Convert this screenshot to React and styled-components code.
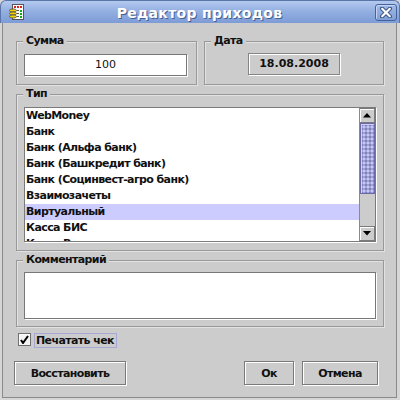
import React from "react";
import styled, { createGlobalStyle } from "styled-components";

const Global = createGlobalStyle`
  html, body { margin: 0; padding: 0; background: #cccccc; }
  body { font-family: "DejaVu Sans", "Liberation Sans", sans-serif; }
  * { box-sizing: border-box; }
`;

const Window = styled.div`
  width: 400px;
  height: 400px;
  display: flex;
  flex-direction: column;
  background: #d6d6d6;
`;

const TitleBar = styled.div`
  height: 23px;
  flex: none;
  display: flex;
  align-items: center;
  padding: 0 2px 0 8px;
  border: 1px solid #5a76a8;
  border-bottom: none;
  border-radius: 6px 6px 0 0;
  background: linear-gradient(#b4c9ee, #94b0e2 45%, #7d9bd6);
`;

const Title = styled.div`
  flex: 1;
  text-align: center;
  color: #ffffff;
  font: bold 14px "DejaVu Sans", sans-serif;
  letter-spacing: 0.3px;
  text-shadow: 1px 1px 0 #45608f;
  padding-top: 1px;
`;

const CloseBox = styled.div`
  width: 22px;
  height: 17px;
  border: 1px solid #46629a;
  border-radius: 3px;
  background: linear-gradient(#9fb9e6, #7f9fd6);
  box-shadow: inset 1px 1px 0 #c4d4f2;
  display: flex;
  align-items: center;
  justify-content: center;
`;

const Body = styled.div`
  flex: 1;
  margin: 0 3px 2px 2px;
  border: 1px solid #8a8a8a;
  border-top: none;
  background: #cccccc;
  padding: 18px 12px 0 13px;
  display: flex;
  flex-direction: column;
  font: bold 11px "DejaVu Sans", sans-serif;
  letter-spacing: -0.6px;
  color: #111;
`;

const TopRow = styled.div`
  display: grid;
  grid-template-columns: 181px 180px;
  column-gap: 7px;
`;

const Group = styled.div`
  position: relative;
  border: 1px solid #999999;
  box-shadow: 1px 1px 0 #e2e2e2, inset 1px 1px 0 #e2e2e2;
  padding: ${(p) => p.$pad};
  margin-top: ${(p) => p.$mt || 0}px;
  display: flex;
  justify-content: ${(p) => (p.$center ? "center" : "flex-start")};
`;

const Legend = styled.span`
  position: absolute;
  left: 6px;
  top: -8px;
  height: 13px;
  line-height: 13px;
  padding: 0 3px;
  background: #cccccc;
`;

const AmountField = styled.div`
  width: 163px;
  height: 22px;
  border: 1px solid #777;
  box-shadow: 1px 1px 0 #fff;
  background: #fff;
  text-align: center;
  line-height: 20px;
  font-weight: normal;
  letter-spacing: 0;
`;

const DateBox = styled.div`
  width: 92px;
  height: 22px;
  border: 1px solid #858585;
  box-shadow: 1px 1px 0 #fff, inset 1px 1px 0 #fff;
  text-align: center;
  line-height: 20px;
  letter-spacing: 0;
`;

const ListBox = styled.div`
  flex: 1;
  height: 135px;
  border: 1px solid #7a7a7a;
  box-shadow: 1px 1px 0 #fff;
  background: #fff;
  display: flex;
  overflow: hidden;
`;

const Rows = styled.div`
  flex: 1;
  overflow: hidden;
`;

const Row = styled.div`
  height: 16px;
  line-height: 16px;
  padding-left: 1px;
  white-space: nowrap;
  background: ${(p) => (p.$sel ? "#ccccff" : "transparent")};
`;

const ScrollBar = styled.div`
  width: 16px;
  flex: none;
  border-left: 1px solid #8a8a8a;
  background: #cccccc;
  display: flex;
  flex-direction: column;
`;

const ArrowBtn = styled.div`
  height: 15px;
  flex: none;
  border: 1px solid #7a7a7a;
  border-left: none;
  box-shadow: inset 1px 1px 0 #fff;
  background: #cccccc;
  display: flex;
  align-items: center;
  justify-content: center;
`;

const Thumb = styled.div`
  height: 71px;
  flex: none;
  border: 1px solid #6a6aa6;
  background-color: #a4a4dc;
  background-image: radial-gradient(circle, #d8d8ff 0.6px, transparent 0.9px),
    radial-gradient(circle, #6a6aa6 0.6px, transparent 0.9px);
  background-size: 4px 4px, 4px 4px;
  background-position: 1px 1px, 3px 3px;
  box-shadow: inset 1px 1px 0 #d0d0ff;
`;

const Track = styled.div`
  flex: 1;
`;

const CommentArea = styled.div`
  flex: 1;
  height: 47px;
  border: 1px solid #777;
  box-shadow: 1px 1px 0 #fff;
  background: #fff;
`;

const CheckRow = styled.div`
  margin-top: 6px;
  display: flex;
  align-items: flex-start;
  gap: 3px;
  padding-left: 2px;
`;

const CheckBox = styled.div`
  width: 13px;
  height: 13px;
  border: 1px solid #6f6f6f;
  box-shadow: inset 1px 1px 0 #fff;
  background: #f4f4f4;
  display: flex;
  align-items: center;
  justify-content: center;
`;

const CheckLabel = styled.div`
  height: 15px;
  line-height: 13px;
  padding: 0 2px 0 1px;
  border: 1px solid #a8a8d8;
`;

const ButtonRow = styled.div`
  margin-top: 13px;
  display: flex;
  gap: 8px;
  margin-left: -2px;
  margin-right: 6px;
`;

const Spacer = styled.div`
  flex: 1;
`;

const Button = styled.div`
  width: ${(p) => p.$w}px;
  height: 24px;
  border: 1px solid #7a7a7a;
  box-shadow: 1px 1px 0 #fff, inset 1px 1px 0 #fff;
  background: #cccccc;
  display: flex;
  align-items: center;
  justify-content: center;
`;

const AppIcon = () => (
  <svg width="15" height="17" viewBox="0 0 15 17">
    <rect x="3.5" y="0.5" width="11" height="15" fill="#fff" stroke="#555" />
    <rect x="5" y="2" width="2" height="2" fill="#d22" />
    <rect x="8" y="2" width="2" height="2" fill="#d22" />
    <rect x="11" y="2" width="2" height="2" fill="#d22" />
    <rect x="11" y="6" width="2" height="2" fill="#1a1" />
    <rect x="11" y="9" width="2" height="2" fill="#1a1" />
    <rect x="11" y="12" width="2" height="2" fill="#1a1" />
    <rect x="8" y="6" width="2" height="1" fill="#555" />
    <rect x="8" y="9" width="2" height="1" fill="#555" />
    <rect x="8" y="12" width="2" height="1" fill="#555" />
    <ellipse cx="4" cy="6.5" rx="3.5" ry="1.6" fill="#f2d200" stroke="#444" strokeWidth="0.8" />
    <ellipse cx="4" cy="9.5" rx="3.5" ry="1.6" fill="#f2d200" stroke="#444" strokeWidth="0.8" />
    <ellipse cx="4" cy="12.5" rx="3.5" ry="1.6" fill="#f2d200" stroke="#444" strokeWidth="0.8" />
  </svg>
);

const CloseIcon = () => (
  <svg width="12" height="11" viewBox="0 0 12 11">
    <path d="M2 1.5 L10 9.5 M10 1.5 L2 9.5" stroke="#3d5788" strokeWidth="4" strokeLinecap="round" />
    <path d="M2.2 1.8 L9.8 9.2 M9.8 1.8 L2.2 9.2" stroke="#ffffff" strokeWidth="2.2" strokeLinecap="round" />
  </svg>
);

const Arrow = ({ down }) => (
  <svg width="8" height="5" viewBox="0 0 8 5">
    <path d={down ? "M0 0 H8 L4 4.5 Z" : "M0 4.5 H8 L4 0 Z"} fill="#000" />
  </svg>
);

const Check = () => (
  <svg width="9" height="9" viewBox="0 0 9 9">
    <path d="M1 5 L3 8 L8 1" stroke="#000" strokeWidth="2" fill="none" />
  </svg>
);

const items = [
  "WebMoney",
  "Банк",
  "Банк (Альфа банк)",
  "Банк (Башкредит банк)",
  "Банк (Социнвест-агро банк)",
  "Взаимозачеты",
  "Виртуальный",
  "Касса БИС",
  "Касса Вход",
];

export default function App() {
  return (
    <>
      <Global />
      <Window>
        <TitleBar>
          <AppIcon />
          <Title>Редактор приходов</Title>
          <CloseBox>
            <CloseIcon />
          </CloseBox>
        </TitleBar>
        <Body>
          <TopRow>
            <Group $pad="12px 9px 8px 7px">
              <Legend>Сумма</Legend>
              <AmountField>100</AmountField>
            </Group>
            <Group $pad="11px 7px 8px 7px" $center>
              <Legend>Дата</Legend>
              <DateBox>18.08.2008</DateBox>
            </Group>
          </TopRow>
          <Group $pad="12px 7px 8px 7px" $mt={9}>
            <Legend>Тип</Legend>
            <ListBox>
              <Rows>
                {items.map((t) => (
                  <Row key={t} $sel={t === "Виртуальный"}>
                    {t}
                  </Row>
                ))}
              </Rows>
              <ScrollBar>
                <ArrowBtn>
                  <Arrow />
                </ArrowBtn>
                <Thumb />
                <Track />
                <ArrowBtn>
                  <Arrow down />
                </ArrowBtn>
              </ScrollBar>
            </ListBox>
          </Group>
          <Group $pad="11px 7px 7px 7px" $mt={9}>
            <Legend>Комментарий</Legend>
            <CommentArea />
          </Group>
          <CheckRow>
            <CheckBox>
              <Check />
            </CheckBox>
            <CheckLabel>Печатать чек</CheckLabel>
          </CheckRow>
          <ButtonRow>
            <Button $w={112}>Восстановить</Button>
            <Spacer />
            <Button $w={50}>Ок</Button>
            <Button $w={76}>Отмена</Button>
          </ButtonRow>
        </Body>
      </Window>
    </>
  );
}
